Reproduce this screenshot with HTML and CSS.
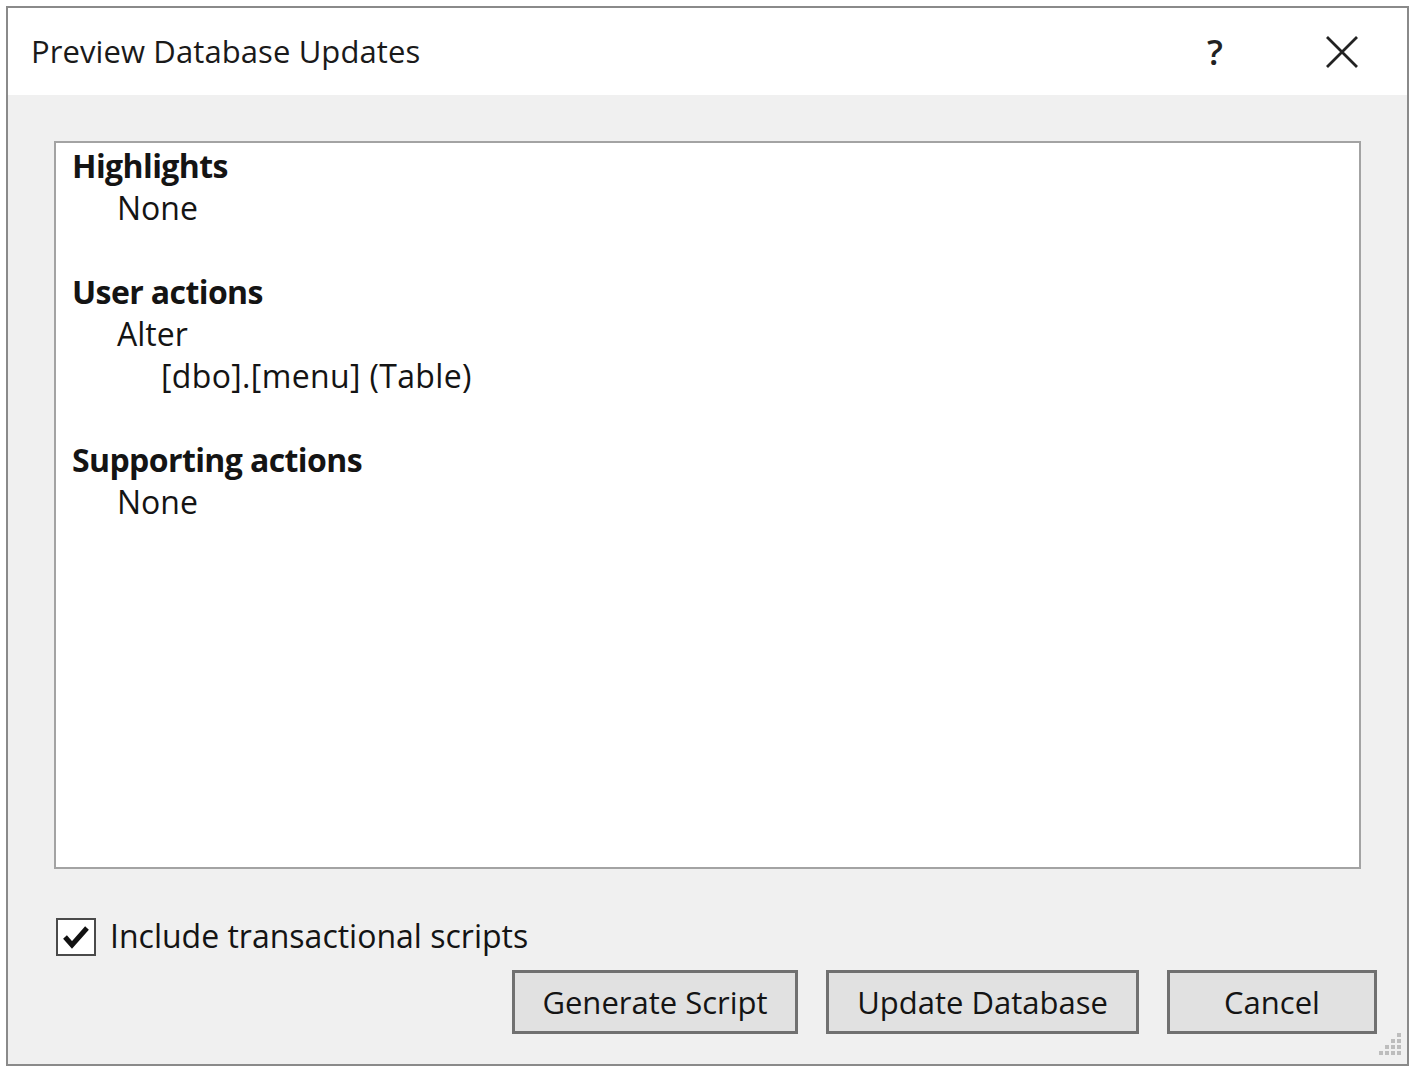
FILE: index.html
```html
<!DOCTYPE html>
<html>
<head>
<meta charset="utf-8">
<link rel="stylesheet" href="styles.css">
</head>
<body>
<div class="window">
  <div class="titlebar">
    <div class="title">Preview Database Updates</div>
    <div class="controls">
      <span class="help">?</span>
      <svg class="close" width="34" height="32" viewBox="0 0 34 32"><path d="M2 1 L32 31 M32 1 L2 31" stroke="#222" stroke-width="2.8" fill="none"/></svg>
    </div>
  </div>
  <div class="content">
    <div class="panel">
      <div class="line head">Highlights</div>
      <div class="line ind1">None</div>
      <div class="line blank"></div>
      <div class="line head">User actions</div>
      <div class="line ind1">Alter</div>
      <div class="line ind2">[dbo].[menu] (Table)</div>
      <div class="line blank"></div>
      <div class="line head">Supporting actions</div>
      <div class="line ind1">None</div>
    </div>
    <label class="check">
      <span class="box"><svg width="30" height="28" viewBox="0 0 30 28"><path d="M4 14 L11 22 L26 5" stroke="#111" stroke-width="5" fill="none"/></svg></span>
      <span class="check-label">Include transactional scripts</span>
    </label>
    <div class="buttons">
      <div class="btn b1">Generate Script</div>
      <div class="btn b2">Update Database</div>
      <div class="btn b3">Cancel</div>
    </div>
    <div class="grip">
      <svg width="30" height="26" viewBox="0 0 30 26">
        <g fill="#bdbdbd">
          <rect x="24" y="2" width="4" height="4"/>
          <rect x="18" y="8" width="4" height="4"/><rect x="24" y="8" width="4" height="4"/>
          <rect x="12" y="14" width="4" height="4"/><rect x="18" y="14" width="4" height="4"/><rect x="24" y="14" width="4" height="4"/>
          <rect x="6" y="20" width="4" height="4"/><rect x="12" y="20" width="4" height="4"/><rect x="18" y="20" width="4" height="4"/><rect x="24" y="20" width="4" height="4"/>
        </g>
      </svg>
    </div>
  </div>
</div>
</body>
</html>
```

FILE: styles.css
```css
html, body {
  margin: 0;
  padding: 0;
  background: #ffffff;
}
body {
  font-family: "Open Sans", "Noto Sans", sans-serif;
  color: #141414;
}
.window {
  margin: 6px 0 0 6px;
  width: 1403px;
  height: 1060px;
  box-sizing: border-box;
  border: 2px solid #8a8a8a;
  display: flex;
  flex-direction: column;
}
.titlebar {
  height: 87px;
  background: #ffffff;
  display: flex;
  align-items: center;
  justify-content: space-between;
  padding-left: 23px;
  flex: none;
}
.title {
  font-size: 31px;
  font-weight: 500;
  letter-spacing: 0.1px;
  color: #1a1a1a;
  margin-top: -2px;
}
.controls {
  display: flex;
  align-items: center;
  margin-top: 0;
}
.help {
  font-size: 35px;
  font-weight: 600;
  color: #222;
  margin-right: 102px;
}
.close {
  margin-right: 48px;
}
.content {
  flex: 1;
  background: #f0f0f0;
  padding: 46px 30px 0 46px;
  position: relative;
}
.panel {
  width: 1307px;
  height: 728px;
  box-sizing: border-box;
  border: 2px solid #a3a3a3;
  background: #ffffff;
  padding: 2px 0 0 16px;
}
.line {
  height: 42px;
  line-height: 42px;
  font-size: 32px;
  font-weight: 500;
  color: #141414;
  white-space: nowrap;
}
.head {
  font-weight: 700;
  letter-spacing: -0.6px;
}
.ind1 { padding-left: 45px; }
.ind2 { padding-left: 89px; letter-spacing: 0.35px; }
.check {
  display: flex;
  align-items: center;
  margin-top: 48px;
  margin-left: 2px;
  height: 40px;
}
.box {
  width: 36px;
  height: 34px;
  border: 2px solid #4a4a4a;
  background: #ffffff;
  display: flex;
  align-items: center;
  justify-content: center;
}
.check-label {
  margin-left: 14px;
  font-size: 32px;
  font-weight: 500;
  color: #141414;
  margin-top: -4px;
}
.buttons {
  display: flex;
  justify-content: flex-end;
  gap: 28px;
  margin-top: 13px;
}
.btn {
  height: 64px;
  box-sizing: border-box;
  border: 3px solid #707070;
  background: #e1e1e1;
  display: flex;
  align-items: center;
  justify-content: center;
  font-size: 31px;
  font-weight: 500;
  color: #141414;
}
.b1 { width: 286px; }
.b2 { width: 313px; }
.b3 { width: 210px; }
.grip {
  position: absolute;
  right: 4px;
  bottom: 2px;
}
```
